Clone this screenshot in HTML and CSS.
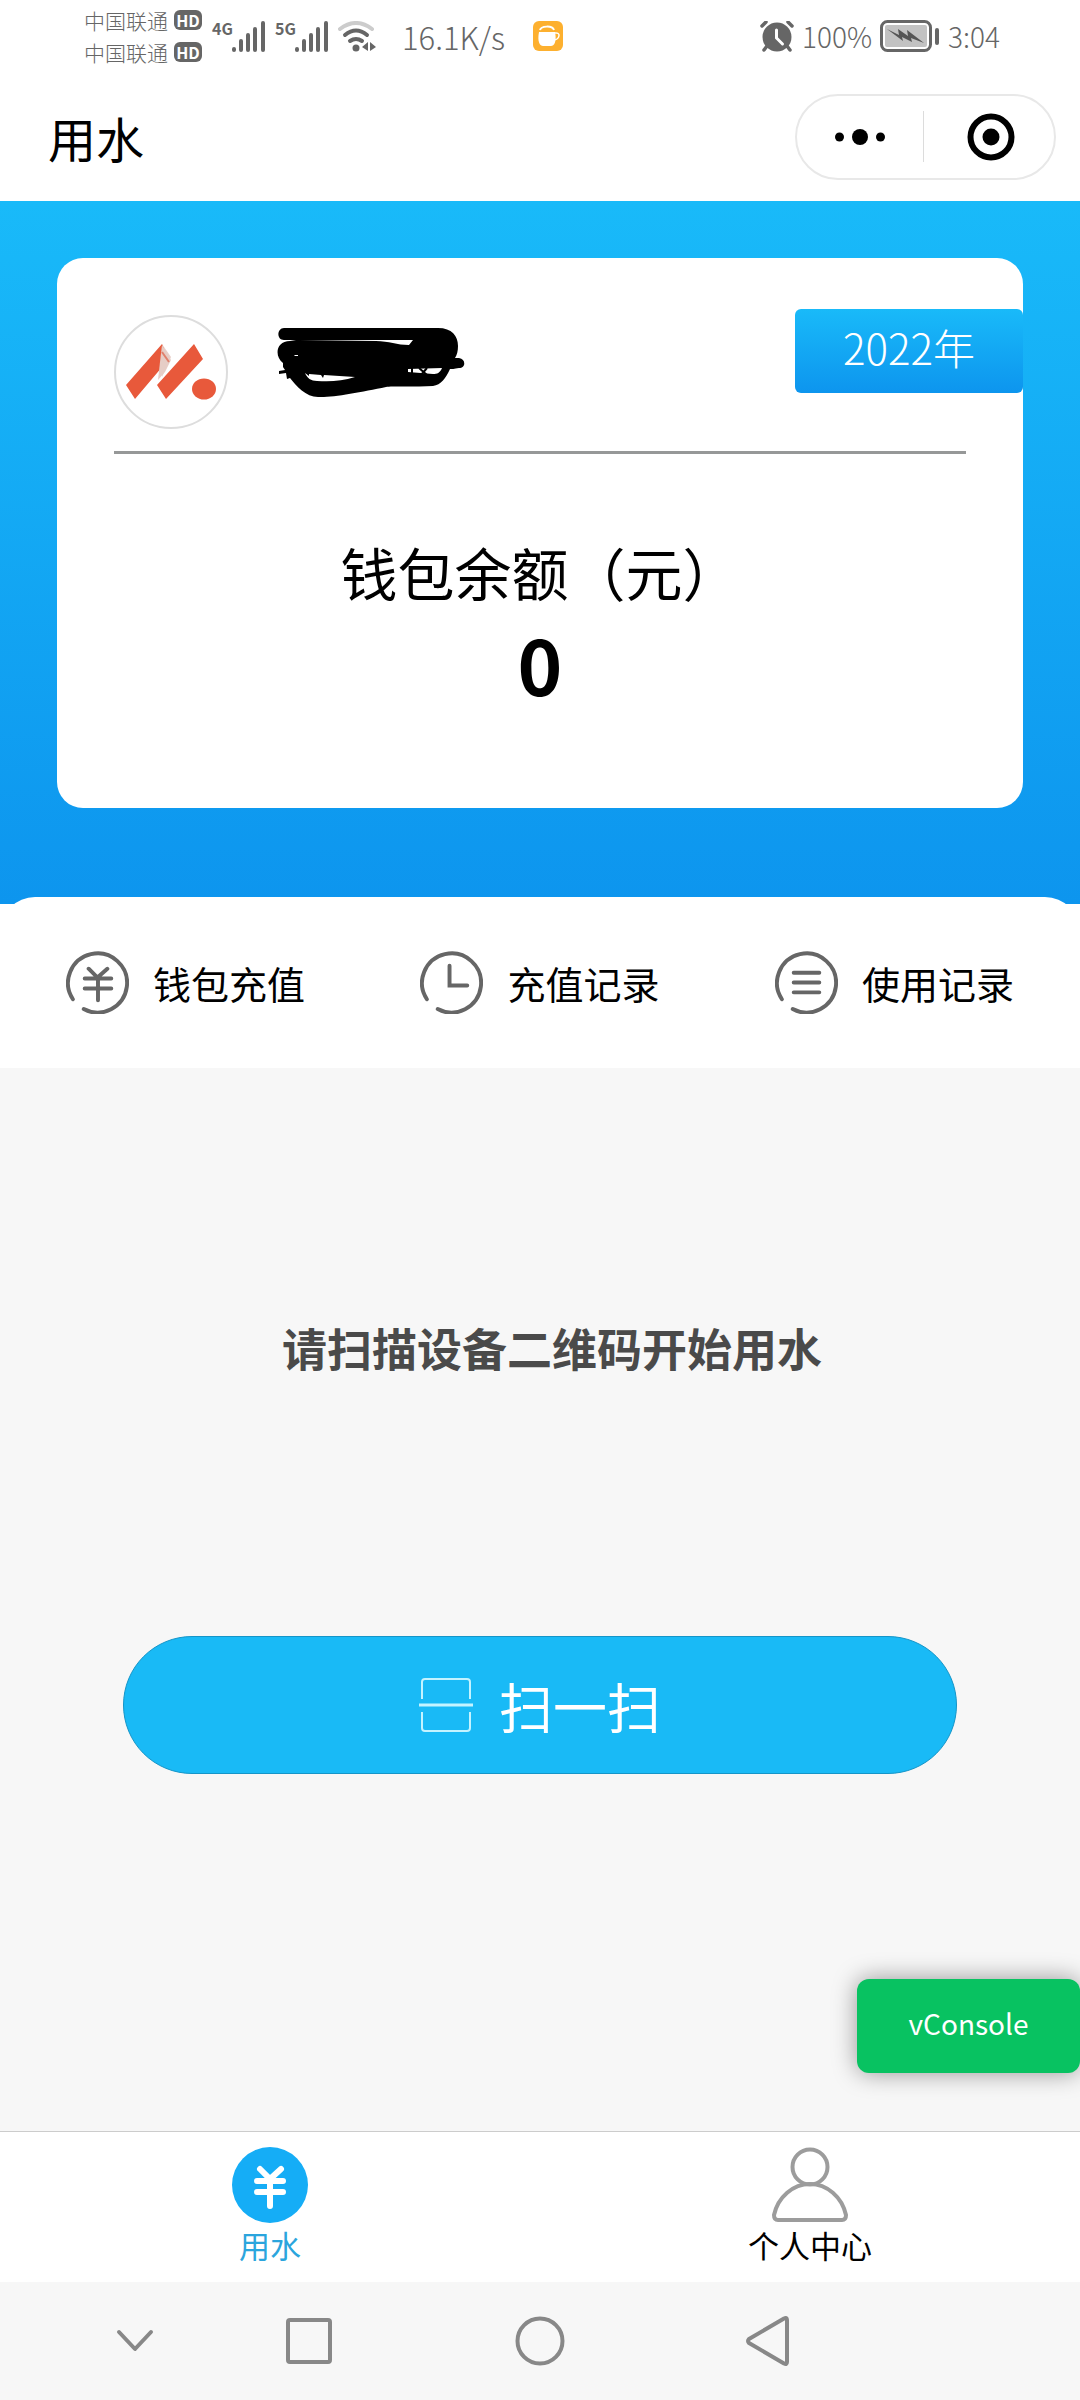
FILE: index.html
```html
<!DOCTYPE html>
<html lang="zh-CN">

<head>
    <meta charset="UTF-8">
    <meta name="viewport" content="width=device-width, initial-scale=1.0">
    <title>用水</title>
    <link rel="stylesheet" href="styles.css">
</head>

<body>
    <div class="status-bar">
        <div class="carriers">
            <div class="carrier">中国联通 <span class="hd">HD</span></div>
            <div class="carrier">中国联通 <span class="hd">HD</span></div>
        </div>
        <div class="signal">
            <span class="network">4G</span>
            <svg width="34" height="31" viewBox="0 0 34 31" stroke="#666" stroke-width="4" stroke-linecap="round">
                <path d="M2 28v1M9 20v9M16 14v15M23 8v21M31 2v27" />
            </svg>
        </div>
        <div class="signal">
            <span class="network">5G</span>
            <svg width="34" height="31" viewBox="0 0 34 31" stroke="#666" stroke-width="4" stroke-linecap="round">
                <path d="M2 28v1M9 20v9M16 14v15M23 8v21M31 2v27" />
            </svg>
        </div>
        <svg class="wifi" width="38" height="31" viewBox="0 0 38 31" fill="none" stroke="#666" stroke-width="4" stroke-linecap="round">
            <path d="M2 8Q18-4 34 8" stroke="#ccc" />
            <path d="M7 14Q18 5 29 14M12 20Q18 16 24 20" />
            <circle cx="18" cy="27" r="3.5" fill="#666" stroke="none" />
            <path d="M30 21v9l-6-4zM32 21l6 5-6 4z" fill="#666" stroke="none" />
        </svg>
        <span class="speed">16.1K/s</span>
        <svg class="app-icon" width="30" height="30" viewBox="0 0 30 30">
            <rect width="30" height="30" rx="6" fill="#fdb02f" />
            <path d="M6 11h16c2 10-1 14-4 14h-8c-3 0-6-4-4-14z" fill="#fff" />
            <path d="M22 12c6-1 5 6-1 7" fill="none" stroke="#fff" stroke-width="1.5" />
            <path d="M7 9c1-4 12-5 14 0" fill="none" stroke="#fff" stroke-width="2" />
        </svg>
        <div class="status-right">
            <svg width="34" height="31" viewBox="0 0 34 31" fill="none" stroke="#666" stroke-linecap="round">
                <circle cx="17" cy="16" r="14.5" fill="#666" stroke="none" />
                <path d="M2 5l4-4M32 5l-4-4M7 25l-3 4M27 25l3 4" stroke-width="3.5" />
                <path d="M16.500 9v8l6 6" stroke="#fff" stroke-width="3" />
            </svg>
            <span class="percent">100%</span>
            <svg width="60" height="32" viewBox="0 0 60 32">
                <rect x="1.500" y="1.500" width="49" height="29" rx="6" fill="#fff" stroke="#666" stroke-width="3" />
                <rect x="5" y="5" width="42" height="22" rx="2" fill="#c2c2c2" />
                <path d="M7 9l12 6-1-6 10 7-1-6 17 13-13-5 1 4-10-5 1 4z" fill="#555" />
                <rect x="55" y="8" width="4" height="17" rx="2" fill="#666" />
            </svg>
            <span class="time">3:04</span>
        </div>
    </div>

    <header class="nav">
        <h1>用水</h1>
        <div class="capsule">
            <button type="button" aria-label="更多">
                <svg width="50" height="16" viewBox="0 0 50 16">
                    <circle cx="4.500" cy="8" r="4.500" />
                    <circle cx="25" cy="8" r="8" />
                    <circle cx="45.500" cy="8" r="4.500" />
                </svg>
            </button>
            <button type="button" aria-label="关闭">
                <svg width="48" height="48" viewBox="0 0 48 48">
                    <circle cx="24" cy="24" r="20.500" fill="none" stroke="#000" stroke-width="6" />
                    <circle cx="24" cy="24" r="8.500" />
                </svg>
            </button>
        </div>
    </header>

    <section class="wallet">
        <div class="card">
            <div class="user">
                <div class="avatar">
                    <svg width="90" height="56" viewBox="0 0 90 56">
                        <path d="M36 0l9 13-9 20z" fill="#e8cfc9" />
                        <path d="M0 41L36 0l6 16-33 39zM31 41L68 0l9 15-37 40z" fill="#e8593b" />
                        <path d="M36 1l9 15-6 12-7 8 2-18z" fill="#e6cdc6" />
                        <path d="M36 8l7 10" stroke="#e0806c" stroke-width="2" />
                        <ellipse cx="78" cy="45" rx="12" ry="10.500" fill="#e8593b" />
                    </svg>
                </div>
                <!-- hidden user name -->
                <svg class="scribble" width="190" height="92" viewBox="0 0 190 92">
                    <path d="M8 2H162C176 2 182 10 182 20C182 25 181 29 179 32H183C190 33 190 42 183 42C178 43 176 43 174 43C170 52 165 59 157 60C140 61 115 60 110 61C85 66 55 72 42 71C30 71 20 60 14 52L11 53L10 47L3 48V45L9 44L7 41V37C-2 30 0 15 14 15L20 14H8C0 14 1 2 8 2Z" />
                    <path d="M24 14H137L133 19C121 19 113 15 100 15ZM29 47L33 50V48L45 49L47 52L48 49L79 51C66 55 55 56 41 55C35 55 31 52 29 47ZM132 43L166 42C164 47 161 48 157 48L132 46ZM18 29h4v1h-3z" fill="#fff" />
                    <path d="M143 42l8 7M151 42l-6 7M136 42v5" stroke="#000" stroke-width="2" />
                </svg>
            </div>
            <span class="year">2022年</span>
            <p class="balance-label">钱包余额（元）</p>
            <p class="balance">0</p>
        </div>
    </section>

    <nav class="actions">
        <a href="#recharge">
            <svg width="63" height="63" viewBox="0 0 64 64">
                <path d="M7 49A30 30 0 1 1 18 59M23 18l9 9 10-9M19 28h27M19 38h27M32.500 28v22" />
            </svg>
            钱包充值
        </a>
        <a href="#recharge-log">
            <svg width="63" height="63" viewBox="0 0 64 64">
                <path d="M7 49A30 30 0 1 1 18 59M30 15v20h18" />
            </svg>
            充值记录
        </a>
        <a href="#usage-log">
            <svg width="63" height="63" viewBox="0 0 64 64">
                <path d="M7 49A30 30 0 1 1 18 59M19 22h26M19 32h26M19 42h26" />
            </svg>
            使用记录
        </a>
    </nav>

    <main>
        <p class="hint">请扫描设备二维码开始用水</p>
        <button type="button" class="scan">
            <svg width="54" height="56" viewBox="0 0 54 56" fill="none" stroke="#c4f3ff" stroke-width="2">
                <path d="M3 22V5q0-3 3-3h42q3 0 3 3v17M3 35v16q0 3 3 3h42q3 0 3-3V35" />
                <path d="M0 28h54" stroke-width="3" />
            </svg>
            扫一扫
        </button>
        <button type="button" class="vconsole">vConsole</button>
    </main>

    <nav class="tabs">
        <a href="#water" class="active">
            <svg width="76" height="76" viewBox="0 0 76 76">
                <circle cx="38" cy="38" r="38" fill="#15adf6" />
                <path d="M28 22l10 10 11-10M25 34h26M25 45h26M38 34v25" fill="none" stroke="#fff" stroke-width="6" stroke-linecap="round" />
            </svg>
            用水
        </a>
        <a href="#me">
            <svg width="76" height="76" viewBox="0 0 76 76" fill="none" stroke="#9c9c9c" stroke-width="4">
                <circle cx="38" cy="20" r="17.500" />
                <path d="M6 73C3 73 2 71 2 68C6 50 21 37 38 37C55 37 70 50 74 68C74 71 73 73 70 73Z" />
            </svg>
            个人中心
        </a>
    </nav>

    <div class="system-nav">
        <button type="button" aria-label="收起">
            <svg width="38" height="24" viewBox="0 0 38 24"><path d="M3 3l16 17L35 3" /></svg>
        </button>
        <button type="button" aria-label="最近任务">
            <svg width="46" height="46" viewBox="0 0 46 46"><rect x="2" y="2" width="42" height="42" rx="2" /></svg>
        </button>
        <button type="button" aria-label="主屏幕">
            <svg width="50" height="50" viewBox="0 0 50 50"><circle cx="25" cy="25" r="22.500" /></svg>
        </button>
        <button type="button" aria-label="返回">
            <svg width="44" height="50" viewBox="0 0 44 50"><path d="M3 23L38 2.500Q41 1 41 4V46Q41 49 38 47.500L3 27Q1 25 3 23Z" /></svg>
        </button>
    </div>
</body>

</html>
```
FILE: styles.css
```css
* {
    margin: 0;
    padding: 0;
    box-sizing: border-box;
}

body {
    display: flex;
    flex-direction: column;
    min-height: 100vh;
    background-color: #fff;
    color: #000;
    font-family: "Noto Sans CJK SC", sans-serif;
    font-weight: 400;
}

button {
    border: none;
    background: none;
    font: inherit;
    cursor: pointer;
}

a {
    color: inherit;
    text-decoration: none;
}

svg {
    display: block;
    flex-shrink: 0;
}

/* phone status bar */
.status-bar {
    display: flex;
    align-items: center;
    height: 72px;
    padding: 0 80px 0 84px;
    color: #666;
    font-size: 31px;
    font-weight: 300;
    white-space: nowrap;
}

.carriers {
    margin-right: 10px;
}

.carrier {
    display: flex;
    align-items: center;
    gap: 6px;
    font-size: 21px;
    line-height: 32px;
}

.hd {
    width: 28px;
    border-radius: 6px;
    background-color: #666;
    color: #fff;
    font-size: 16px;
    font-weight: 700;
    line-height: 20px;
    text-align: center;
}

.signal {
    display: flex;
    align-items: flex-start;
    margin-right: 9px;
}

.network {
    width: 20px;
    font-size: 16px;
    font-weight: 700;
    line-height: 14px;
}

.speed {
    margin: 0 28px 0 26px;
}

.status-right {
    display: flex;
    align-items: center;
    gap: 8px;
    margin-left: auto;
    font-size: 28px;
}

/* mini program header */
.nav {
    display: flex;
    align-items: center;
    justify-content: space-between;
    height: 129px;
    padding: 0 24px 0 48px;
}

h1 {
    font-size: 48px;
    font-weight: 400;
}

.capsule {
    display: flex;
    align-items: center;
    width: 261px;
    height: 86px;
    border: 2px solid #e8e8e8;
    border-radius: 43px;
}

.capsule button {
    display: flex;
    flex: 1;
    align-items: center;
    justify-content: center;
    height: 51px;
}

.capsule button + button {
    padding-left: 4px;
    border-left: 1px solid #dcdcdc;
}

.wallet {
    padding: 57px 57px 96px;
    background: linear-gradient(#19baf9, #0d95ee);
}

.card {
    position: relative;
    padding: 57px 57px 93px;
    border-radius: 26px;
    background-color: #fff;
    text-align: center;
}

.user {
    display: flex;
    align-items: center;
    gap: 48px;
    padding-bottom: 22px;
    border-bottom: 3px solid #969898;
}

.avatar {
    display: flex;
    align-items: center;
    justify-content: center;
    width: 114px;
    height: 114px;
    border: 2px solid #ddd;
    border-radius: 50%;
}

.year {
    position: absolute;
    top: 51px;
    right: 0;
    width: 228px;
    padding-bottom: 8px;
    border-radius: 6px;
    background: linear-gradient(#19baf9, #0d95ee);
    color: #fff;
    font-size: 42px;
    font-weight: 300;
    line-height: 76px;
}

.balance-label {
    margin-top: 77px;
    font-size: 57px;
    line-height: 80px;
}

.balance {
    font-size: 76px;
    font-weight: 700;
    line-height: 104px;
}

.actions {
    display: flex;
    align-items: center;
    justify-content: space-between;
    height: 171px;
    margin-top: -7px;
    padding: 0 66px;
    border-radius: 35px 35px 0 0;
    background-color: #fff;
    font-size: 38px;
}

.actions a {
    display: flex;
    align-items: center;
    gap: 24px;
}

.actions svg {
    fill: none;
    stroke: #666;
    stroke-width: 4px;
    stroke-linecap: round;
}

main {
    position: relative;
    display: flex;
    flex: 1;
    flex-direction: column;
    align-items: center;
    padding: 246px 123px 0;
    background-color: #f7f7f7;
}

.hint {
    padding-left: 24px;
    color: #4a4a4a;
    font-size: 45px;
    font-weight: 700;
    line-height: 68px;
}

.scan {
    display: flex;
    align-items: center;
    justify-content: center;
    gap: 26px;
    width: 100%;
    height: 138px;
    margin-top: 254px;
    border: 1px solid #1595c8;
    border-radius: 69px;
    background-color: #19baf6;
    color: #fff;
    font-size: 54px;
}

.vconsole {
    position: absolute;
    right: 0;
    bottom: 58px;
    width: 223px;
    height: 94px;
    padding-bottom: 6px;
    border-radius: 12px;
    background-color: #08c261;
    box-shadow: 0 0 24px rgba(0, 0, 0, 0.4);
    color: #fff;
    font-size: 28px;
}

.tabs {
    display: flex;
    height: 151px;
    border-top: 1px solid #ccc;
    font-size: 31px;
    line-height: 44px;
}

.tabs a {
    display: flex;
    flex: 1;
    flex-direction: column;
    align-items: center;
    padding-top: 15px;
}

.tabs .active {
    color: #2ba5dd;
}

/* android buttons */
.system-nav {
    display: grid;
    grid-template-columns: 114fr 234fr 228fr 228fr;
    align-items: center;
    height: 118px;
    padding: 0 198px 0 78px;
    background-color: #f7f7f7;
}

.system-nav button {
    display: flex;
    justify-content: center;
}

.system-nav svg {
    fill: none;
    stroke: #888;
    stroke-width: 4px;
    stroke-linecap: round;
    stroke-linejoin: round;
}
```
